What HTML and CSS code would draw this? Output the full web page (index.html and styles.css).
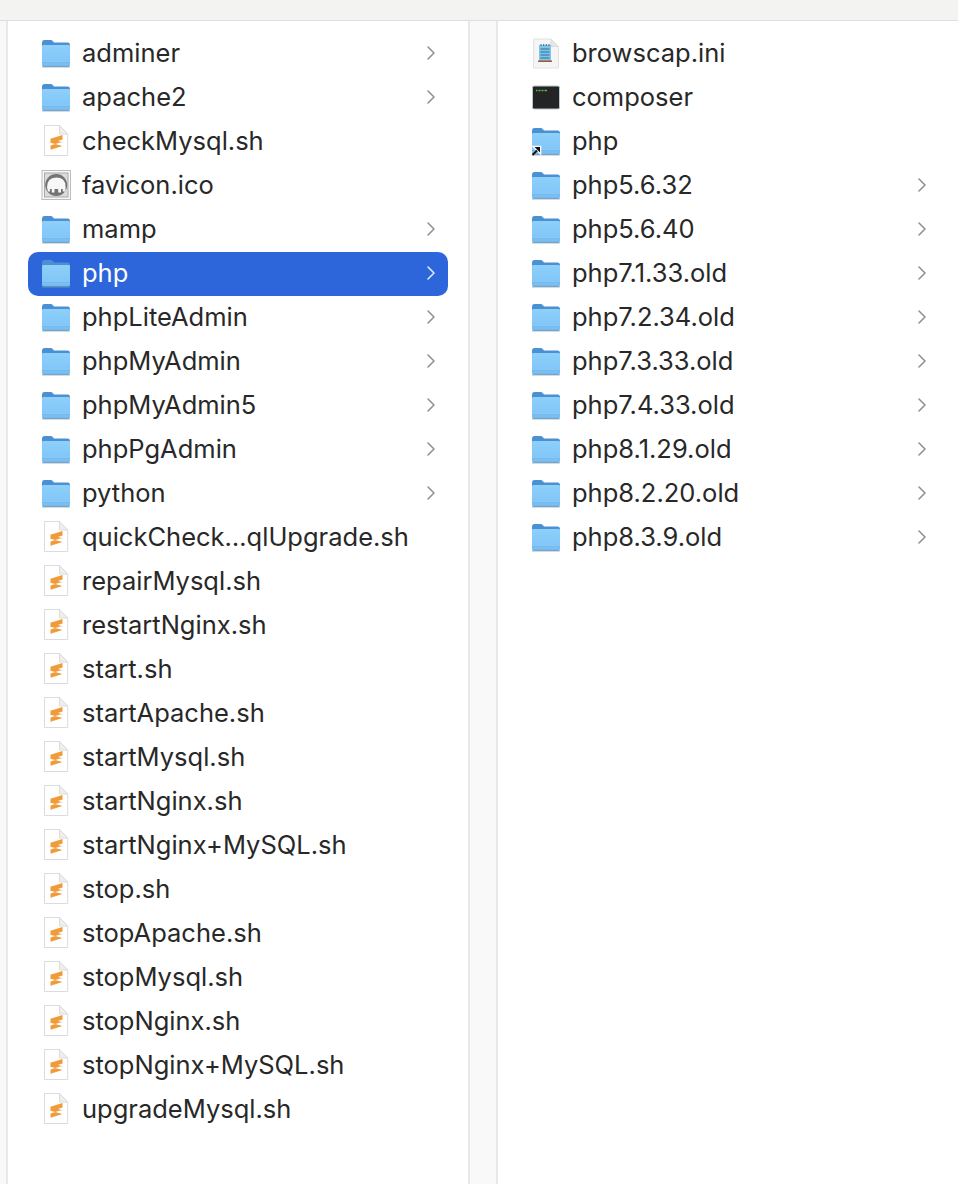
FILE: index.html
```html
<!DOCTYPE html>
<html lang="en">
<head>
<meta charset="utf-8">
<title>Finder columns</title>
<link rel="stylesheet" href="styles.css">
</head>
<body>
<svg class="defs" width="0" height="0" aria-hidden="true">
  <defs>
    <linearGradient id="fb" x1="0" y1="0" x2="0" y2="1"><stop offset="0" stop-color="#8ed0fa"/><stop offset="1" stop-color="#7cc3f6"/></linearGradient>
    <symbol id="folder" viewBox="0 0 30 30" overflow="visible">
      <path d="M1 29.300H29" stroke="#9a9a9a" stroke-width="1" opacity=".45"/>
      <path d="M1 5Q1 2 3.500 2H9.500Q11 2 12 3.300L13 4.500H27Q29 4.500 29 7V10H1Z" fill="#4a90d2"/>
      <path d="M1 8.300Q1 7 2.500 7H27.500Q29 7 29 8.300V26.500Q29 28.500 27 28.500H3Q1 28.500 1 26.500Z" fill="url(#fb)"/>
      <path d="M1 23.500H29V26.500Q29 28.500 27 28.500H3Q1 28.500 1 26.500Z" fill="#72b9ee"/>
      <path d="M1 23.500H29M1 26H29" stroke="#90cdf7" stroke-width=".6" fill="none"/>
      <path d="M1.500 28.600H28.500" stroke="#5288b5" stroke-width=".8" opacity=".75"/>
    </symbol>
    <symbol id="script" viewBox="0 0 30 30" overflow="visible">
      <path d="M3.500 -.5H18.500L26.700 8V29.500H3.500Z" fill="#fff" stroke="#dcdcdc"/>
      <path d="M18.500 -.5V8H26.700Z" fill="#efefef" stroke="#dcdcdc"/>
      <path d="M9.500 12.800L21.500 9V13.500L9.500 17.300ZM9.500 13L21.500 16.300V20L9.500 16.700ZM21.500 15.700L9.500 19.500V23.800L21.500 20Z" fill="#f09a38"/>
    </symbol>
    <symbol id="ico" viewBox="0 0 30 30" overflow="visible">
      <rect x="1" y="0.500" width="28.500" height="29" fill="#f7f7f7" stroke="#bcbcbc"/>
      <rect x="3.500" y="3" width="23.500" height="24" fill="#dcdcdc" stroke="#a9a9a9"/>
      <circle cx="15.200" cy="15" r="11" fill="#737373"/>
      <path d="M6 17.500Q6 7.500 15.200 7.500Q24.500 7.500 24.500 16.500V21.500H21.800V19H20V22.500H17.200V19H13.500V22.500H10.800V19H9V21.500H7Z" fill="#f7f7f7"/>
    </symbol>
    <symbol id="ini" viewBox="0 0 30 30" overflow="visible">
      <path d="M2.500 1H20L27.500 8.500V30H2.500Z" fill="#f5f5f5" stroke="#e2e2e2"/>
      <path d="M20 1V8.500H27.500Z" fill="#e6e6e6" stroke="#dcdcdc"/>
      <rect x="8" y="7" width="12" height="16" fill="#7ec5e8"/>
      <path d="M9.500 11H18.500M9.500 14H18.500M9.500 17H18.500M9.500 20H18.500" stroke="#2e6f9c" stroke-width="1"/>
      <path d="M10 6V8M12.700 6V8M15.300 6V8M18 6V8" stroke="#1f5f8a" stroke-width=".9"/>
      <rect x="7" y="22.500" width="14" height="1.500" fill="#a8552e"/>
    </symbol>
    <symbol id="term" viewBox="0 0 30 30" overflow="visible">
      <rect x="1.500" y="4" width="27" height="23" rx="1.500" fill="#242424" stroke="#b9c7cf"/>
      <path d="M5 8.500H6.500M7.500 8.500H9.500M10.500 8.500H12.500M13.500 8.500H16" stroke="#58b85c" stroke-width="1.300"/>
    </symbol>
    <symbol id="chev" viewBox="0 0 8 14">
      <path d="M1 1L7 7L1 13" fill="none" stroke="currentColor" stroke-width="1.500" stroke-linecap="round" stroke-linejoin="round"/>
    </symbol>
  </defs>
</svg>
<div class="topbar"></div>
<main class="browser">
  <div class="edge"></div>
  <section class="column first">
    <div class="row"><svg class="icon"><use href="#folder"/></svg><span class="name">adminer</span><svg class="chev"><use href="#chev"/></svg></div>
    <div class="row"><svg class="icon"><use href="#folder"/></svg><span class="name">apache2</span><svg class="chev"><use href="#chev"/></svg></div>
    <div class="row"><svg class="icon"><use href="#script"/></svg><span class="name">checkMysql.sh</span></div>
    <div class="row"><svg class="icon"><use href="#ico"/></svg><span class="name">favicon.ico</span></div>
    <div class="row"><svg class="icon"><use href="#folder"/></svg><span class="name">mamp</span><svg class="chev"><use href="#chev"/></svg></div>
    <div class="row selected"><svg class="icon"><use href="#folder"/></svg><span class="name">php</span><svg class="chev"><use href="#chev"/></svg></div>
    <div class="row"><svg class="icon"><use href="#folder"/></svg><span class="name">phpLiteAdmin</span><svg class="chev"><use href="#chev"/></svg></div>
    <div class="row"><svg class="icon"><use href="#folder"/></svg><span class="name">phpMyAdmin</span><svg class="chev"><use href="#chev"/></svg></div>
    <div class="row"><svg class="icon"><use href="#folder"/></svg><span class="name">phpMyAdmin5</span><svg class="chev"><use href="#chev"/></svg></div>
    <div class="row"><svg class="icon"><use href="#folder"/></svg><span class="name">phpPgAdmin</span><svg class="chev"><use href="#chev"/></svg></div>
    <div class="row"><svg class="icon"><use href="#folder"/></svg><span class="name">python</span><svg class="chev"><use href="#chev"/></svg></div>
    <div class="row"><svg class="icon"><use href="#script"/></svg><span class="name">quickCheck…qlUpgrade.sh</span></div>
    <div class="row"><svg class="icon"><use href="#script"/></svg><span class="name">repairMysql.sh</span></div>
    <div class="row"><svg class="icon"><use href="#script"/></svg><span class="name">restartNginx.sh</span></div>
    <div class="row"><svg class="icon"><use href="#script"/></svg><span class="name">start.sh</span></div>
    <div class="row"><svg class="icon"><use href="#script"/></svg><span class="name">startApache.sh</span></div>
    <div class="row"><svg class="icon"><use href="#script"/></svg><span class="name">startMysql.sh</span></div>
    <div class="row"><svg class="icon"><use href="#script"/></svg><span class="name">startNginx.sh</span></div>
    <div class="row"><svg class="icon"><use href="#script"/></svg><span class="name">startNginx+MySQL.sh</span></div>
    <div class="row"><svg class="icon"><use href="#script"/></svg><span class="name">stop.sh</span></div>
    <div class="row"><svg class="icon"><use href="#script"/></svg><span class="name">stopApache.sh</span></div>
    <div class="row"><svg class="icon"><use href="#script"/></svg><span class="name">stopMysql.sh</span></div>
    <div class="row"><svg class="icon"><use href="#script"/></svg><span class="name">stopNginx.sh</span></div>
    <div class="row"><svg class="icon"><use href="#script"/></svg><span class="name">stopNginx+MySQL.sh</span></div>
    <div class="row"><svg class="icon"><use href="#script"/></svg><span class="name">upgradeMysql.sh</span></div>
  </section>
  <div class="gutter"></div>
  <section class="column second">
    <div class="row"><svg class="icon"><use href="#ini"/></svg><span class="name">browscap.ini</span></div>
    <div class="row"><svg class="icon"><use href="#term"/></svg><span class="name">composer</span></div>
    <div class="row"><span class="iconwrap"><svg class="icon"><use href="#folder"/></svg><svg class="alias" viewBox="0 0 10 11"><path d="M1.500 10L6 5.500M3.500 2H9V7.500Z" fill="#fff" stroke="#fff" stroke-width="2.600"/><path d="M1.500 10L6 5.500" fill="none" stroke="#111" stroke-width="2.300"/><path d="M3.500 2H9V7.500Z" fill="#111"/></svg></span><span class="name">php</span></div>
    <div class="row"><svg class="icon"><use href="#folder"/></svg><span class="name">php5.6.32</span><svg class="chev"><use href="#chev"/></svg></div>
    <div class="row"><svg class="icon"><use href="#folder"/></svg><span class="name">php5.6.40</span><svg class="chev"><use href="#chev"/></svg></div>
    <div class="row"><svg class="icon"><use href="#folder"/></svg><span class="name">php7.1.33.old</span><svg class="chev"><use href="#chev"/></svg></div>
    <div class="row"><svg class="icon"><use href="#folder"/></svg><span class="name">php7.2.34.old</span><svg class="chev"><use href="#chev"/></svg></div>
    <div class="row"><svg class="icon"><use href="#folder"/></svg><span class="name">php7.3.33.old</span><svg class="chev"><use href="#chev"/></svg></div>
    <div class="row"><svg class="icon"><use href="#folder"/></svg><span class="name">php7.4.33.old</span><svg class="chev"><use href="#chev"/></svg></div>
    <div class="row"><svg class="icon"><use href="#folder"/></svg><span class="name">php8.1.29.old</span><svg class="chev"><use href="#chev"/></svg></div>
    <div class="row"><svg class="icon"><use href="#folder"/></svg><span class="name">php8.2.20.old</span><svg class="chev"><use href="#chev"/></svg></div>
    <div class="row"><svg class="icon"><use href="#folder"/></svg><span class="name">php8.3.9.old</span><svg class="chev"><use href="#chev"/></svg></div>
  </section>
</main>
</body>
</html>
```

FILE: styles.css
```css
* { box-sizing: border-box; }
html, body { margin: 0; padding: 0; height: 100%; overflow: hidden; background: #fff; }
body { display: flex; flex-direction: column; font-family: Inter, "Liberation Sans", sans-serif; }
.defs { position: absolute; }
.topbar { height: 21px; flex: none; background: #f3f3f1; border-bottom: 1px solid #dedede; }
.browser { flex: 1; display: flex; min-height: 0; }
.edge { width: 8px; flex: none; background: #f8f8f8; border-right: 2px solid #e8e8e8; }
.column { padding-top: 11px; display: flex; flex-direction: column; }
.first { width: 460px; flex: none; padding-left: 20px; padding-right: 20px; }
.gutter { width: 30px; flex: none; background: #f9f9f9; border-left: 2px solid #e8e8e8; border-right: 2px solid #e8e8e8; }
.second { flex: 1; padding-left: 20px; padding-right: 19px; }
.row { height: 44px; flex: none; display: flex; align-items: center; padding: 0 13px 2px 13px; border-radius: 10px; color: #282828; }
.icon { width: 30px; height: 30px; flex: none; display: block; overflow: visible; }
.iconwrap { position: relative; width: 30px; height: 30px; flex: none; display: block; }
.alias { position: absolute; left: 0; bottom: 0; width: 10px; height: 11px; overflow: visible; }
.name { margin-left: 11px; margin-bottom: 2px; flex: 1; font-size: 25.5px; white-space: nowrap; }
.chev { width: 8px; height: 14px; flex: none; color: #8e8e8e; }
.selected { background: #2c66da; color: #fff; }
.selected .chev { color: #e6edfb; }
```
